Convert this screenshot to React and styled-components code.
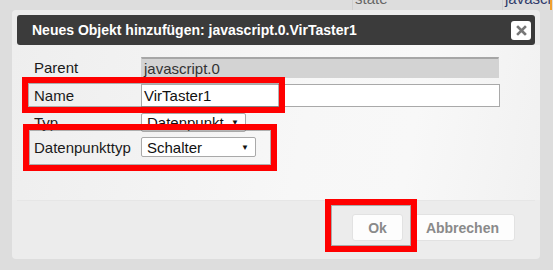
import React from 'react'
import styled, { createGlobalStyle } from 'styled-components'

const Global = createGlobalStyle`
    body{
        margin: 0;
        background: #dddddd;
        font-family: "Liberation Sans", Arial, sans-serif;
    }
`

const Page = styled.div`
    width: 553px;
    height: 270px;
    overflow: hidden;
`

const GridStrip = styled.div`
    height: 10px;
    display: flex;
    overflow: hidden;
    padding-left: 352px;
`

const GridCell = styled.div`
    width: ${p => p.$w}px;
    height: 10px;
    border-left: 1px solid #cfcfcf;
    border-right: ${p => p.$edge ? '2px solid #f0a030' : 'none'};
    box-sizing: border-box;
    padding-left: 2px;
    overflow: hidden;
    div{
        margin-top: -9px;
        font-size: 15px;
        line-height: 15px;
        color: ${p => p.$color};
        white-space: nowrap;
    }
`

const Dialog = styled.div`
    position: relative;
    margin-left: 12px;
    width: 528px;
    height: 249px;
    box-sizing: border-box;
    padding: 5px;
    background: #ececec;
    border-radius: 4px;
    display: flex;
    flex-direction: column;
`

const TitleBar = styled.div`
    height: 30px;
    background: #3b3b3b;
    border-radius: 3px;
    display: flex;
    align-items: center;
    justify-content: space-between;
    padding: 0 4px 0 15px;
`

const Title = styled.span`
    color: #ffffff;
    font-weight: 700;
    font-size: 14px;
`

const CloseButton = styled.div`
    width: 20px;
    height: 19px;
    background: #ffffff;
    border-radius: 3px;
    display: flex;
    align-items: center;
    justify-content: center;
`

const Content = styled.div`
    height: 155px;
    box-sizing: border-box;
    padding: 12px 0 0 17px;
    margin: 0 -5px;
    padding-left: 22px;
    background: linear-gradient(100deg, #eeeeee 0%, #f7f7f7 55%, #f8f8f8 75%, #f1f1f1 100%);
    display: flex;
    flex-direction: column;
`

const Row = styled.div`
    display: flex;
    align-items: center;
    height: ${p => p.$h}px;
    margin-bottom: ${p => p.$mb}px;
`

const Label = styled.div`
    width: 107px;
    font-size: 15px;
    color: #1a1a1a;
    white-space: nowrap;
`

const Field = styled.div`
    width: ${p => p.$w}px;
    height: 100%;
    box-sizing: border-box;
    display: flex;
    align-items: center;
    font-size: 15px;
    color: #111;
    padding-left: 2px;
    background: ${p => p.$disabled ? '#d3d3d3' : '#ffffff'};
    border: 1px solid ${p => p.$disabled ? '#d3d3d3' : '#a9a9a9'};
    border-top: ${p => p.$disabled ? '2px solid #a6a6a6' : '1px solid #a9a9a9'};
    ${p => p.$disabled && 'color: #333;'}
`

const Select = styled.div`
    width: ${p => p.$w}px;
    height: 100%;
    box-sizing: border-box;
    display: flex;
    align-items: center;
    justify-content: space-between;
    padding: 0 6px 0 5px;
    background: #ffffff;
    border: 1px solid #a9a9a9;
    border-radius: 2px;
    font-size: 15px;
    color: #111;
`

const Arrow = styled.span`
    font-size: 8px;
    color: #111;
`

const Footer = styled.div`
    flex: 1;
    display: flex;
    justify-content: flex-end;
    align-items: flex-start;
    gap: 7px;
    padding: 13px 20px 0 0;
    border-top: 1px solid #e6e6e6;
`

const Button = styled.div`
    height: 27px;
    box-sizing: border-box;
    padding: 0 15px;
    display: flex;
    align-items: center;
    background: #fdfdfd;
    border: 1px solid #e2e2e2;
    border-radius: 3px;
    font-weight: 700;
    font-size: 14px;
    color: #8a8a8a;
`

const Highlight = styled.div`
    position: absolute;
    left: ${p => p.$x}px;
    top: ${p => p.$y}px;
    width: ${p => p.$w}px;
    height: ${p => p.$h}px;
    box-sizing: border-box;
    border: 6px solid #ff0000;
    box-shadow: inset 0 0 0 1px rgba(90, 90, 90, 0.45);
`

function CloseIcon() {
    return (
        <svg width="11" height="11" viewBox="0 0 11 11">
            <path d="M2 2 L9 9 M9 2 L2 9" stroke="#777" strokeWidth="2.6" strokeLinecap="square" />
        </svg>
    )
}

export default function App() {
    return (
        <Page>
            <Global />
            <GridStrip>
                <GridCell $w={150} $color="#666"><div>state</div></GridCell>
                <GridCell $w={50} $color="#2f3a6a" $edge><div>javascript.0</div></GridCell>
            </GridStrip>
            <Dialog>
                <TitleBar>
                    <Title>Neues Objekt hinzufügen: javascript.0.VirTaster1</Title>
                    <CloseButton><CloseIcon /></CloseButton>
                </TitleBar>
                <Content>
                    <Row $h={21} $mb={6}>
                        <Label>Parent</Label>
                        <Field $w={358} $disabled>javascript.0</Field>
                    </Row>
                    <Row $h={23} $mb={6}>
                        <Label>Name</Label>
                        <Field $w={359}>VirTaster1</Field>
                    </Row>
                    <Row $h={19} $mb={5}>
                        <Label>Typ</Label>
                        <Select $w={105}>Datenpunkt <Arrow>▼</Arrow></Select>
                    </Row>
                    <Row $h={20} $mb={0}>
                        <Label>Datenpunkttyp</Label>
                        <Select $w={115}>Schalter <Arrow>▼</Arrow></Select>
                    </Row>
                </Content>
                <Footer>
                    <Button>Ok</Button>
                    <Button>Abbrechen</Button>
                </Footer>
                <Highlight $x={10} $y={67} $w={263} $h={36} />
                <Highlight $x={11} $y={114} $w={254} $h={47} />
                <Highlight $x={313} $y={189} $w={92} $h={53} />
            </Dialog>
        </Page>
    )
}
